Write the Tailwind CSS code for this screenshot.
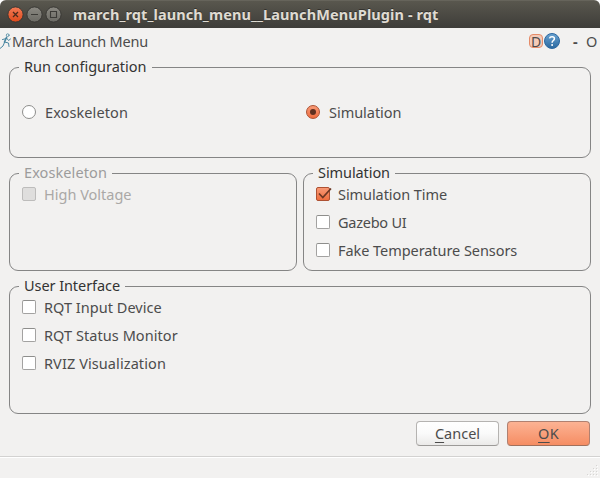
<!DOCTYPE html>
<html lang="en">
<head>
<meta charset="utf-8">
<title>march_rqt_launch_menu__LaunchMenuPlugin - rqt</title>
<script src="https://cdn.jsdelivr.net/npm/@tailwindcss/browser@4"></script>
</head>
<body class="bg-white">
<div class="flex h-[478px] w-[600px] flex-col overflow-hidden rounded-t-[6px] bg-[#f2f1f0] font-['Noto_Sans','Open_Sans',sans-serif] text-[14.5px] leading-5 text-[#4c4c4c] whitespace-nowrap">

  <header class="flex h-7 shrink-0 items-center border-t border-[#66645b] bg-linear-to-b from-[#59574e] to-[#3e3d39] pl-[7px]">
    <svg class="h-[17px] w-[56px] shrink-0" viewBox="0 0 56 17" fill="none">
      <defs>
        <linearGradient id="close" x1="0" y1="0" x2="0" y2="1"><stop stop-color="#f47b56"/><stop offset="1" stop-color="#df4a1b"/></linearGradient>
        <linearGradient id="grey" x1="0" y1="0" x2="0" y2="1"><stop stop-color="#8b8982"/><stop offset="1" stop-color="#6b6a64"/></linearGradient>
      </defs>
      <circle cx="8.5" cy="8.5" r="7.6" fill="url(#close)" stroke="#373632" stroke-width=".9"/>
      <circle cx="27.5" cy="8.5" r="7.6" fill="url(#grey)" stroke="#373632" stroke-width=".9"/>
      <circle cx="46.5" cy="8.5" r="7.6" fill="url(#grey)" stroke="#373632" stroke-width=".9"/>
      <path d="M6 6l5 5M11 6l-5 5" stroke="#4c2a1c" stroke-width="1.3"/>
      <path d="M24 8.5h7" stroke="#3c3b37" stroke-width="1.1"/>
      <path d="M43.5 5.5h6v6h-6z" stroke="#3c3b37" stroke-width="1.1"/>
    </svg>
    <h1 class="mb-[2px] ml-[10px] text-[14.5px] font-bold tracking-[0.1px] text-[#dfdbd2] [text-shadow:0_-1px_0_#33322e]">march_rqt_launch_menu__LaunchMenuPlugin - rqt</h1>
  </header>

  <div class="flex h-[29px] shrink-0 items-center pb-[3px]">
    <svg class="h-[18px] w-3 shrink-0" viewBox="0 0 12 18" fill="none" stroke="#4a86a0" stroke-linecap="round" stroke-linejoin="round">
      <circle cx="7.7" cy="3.2" r="1.4" stroke-width=".8"/>
      <path d="M6.5 5.5L4.5 10" stroke-width="1.7"/>
      <path d="M6.500 6.500L2.500 7.500M7 6.500l1.500 2L10.500 7M4.500 10l4 1 .5 3.500M4.500 10.500l-1.500 3.500-3 2.500" stroke-width="1"/>
    </svg>
    <span class="tracking-[-0.19px]">March Launch Menu</span>
    <div class="ml-auto flex items-center">
      <span class="flex h-[14px] w-[14px] items-center justify-center rounded-[4px] border border-[#e58b68] bg-[#f4cbb9] pt-[2px] text-[14px] leading-3">D</span>
      <svg class="ml-px h-4 w-4" viewBox="0 0 16 16">
        <defs><linearGradient id="help" x1="0" y1="0" x2="0" y2="1"><stop stop-color="#6aa3d2"/><stop offset="1" stop-color="#2a689f"/></linearGradient></defs>
        <circle cx="8" cy="8" r="7.500" fill="url(#help)" stroke="#2d68a0"/>
        <path d="M5.500 5.300C6 3.200 10.400 3.100 10.400 5.700c0 1.700-2.300 1.900-2.300 4" fill="none" stroke="#fff" stroke-width="1.500"/>
        <circle cx="8.100" cy="12" r="1" fill="#fff"/>
      </svg>
      <span class="ml-[13px] w-[13px] font-bold">-</span>
      <span class="w-[14px]">O</span>
    </div>
  </div>

  <main class="flex shrink-0 flex-col pr-[9px] pl-[9px]">
    <fieldset class="h-[101px] rounded-[9px] border border-[#858585] pl-[9px]">
      <legend class="h-[21px] px-[5px] leading-[19px] text-[#333]">Run configuration</legend>
      <div class="flex pt-6 pl-[3px]">
        <label class="flex w-[284px] items-center gap-[9px]">
          <i class="size-[14px] rounded-full border border-[#8e8e8c] bg-white"></i>
          <span class="tracking-[0.09px]">Exoskeleton</span>
        </label>
        <label class="flex items-center gap-[9px]">
          <i class="flex size-[14px] items-center justify-center rounded-full border border-[#ad5133] bg-linear-to-b from-[#f89a77] to-[#ee6c3d]"><b class="size-[6px] rounded-full bg-[#5f3020]"></b></i>
          <span class="tracking-[-0.03px]">Simulation</span>
        </label>
      </div>
    </fieldset>

    <div class="mt-[5px] flex gap-[6px]">
      <fieldset class="h-[108px] w-[288px] rounded-[9px] border border-[#858585] pl-[9px] text-[#aaa8a6]">
        <legend class="h-[21px] px-[5px] leading-[19px] tracking-[0.09px] text-[#9c9c9c]">Exoskeleton</legend>
        <label class="flex items-center gap-2 pl-[3px]">
          <i class="size-[14px] rounded-[2px] border border-[#bdbcbb] bg-[#dfdedd]"></i>
          <span>High Voltage</span>
        </label>
      </fieldset>
      <fieldset class="h-[108px] w-[288px] rounded-[9px] border border-[#858585] pl-[9px]">
        <legend class="h-[21px] px-[5px] leading-[19px] tracking-[-0.08px] text-[#333]">Simulation</legend>
        <div class="flex flex-col gap-2 pl-[3px]">
          <label class="flex items-center gap-2">
            <svg class="-mr-[2px] h-[14px] w-4" viewBox="0 0 16 14" fill="none">
              <defs><linearGradient id="check" x1="0" y1="0" x2="0" y2="1"><stop stop-color="#f89a77"/><stop offset="1" stop-color="#ee6c3d"/></linearGradient></defs>
              <rect x=".5" y=".5" width="13" height="13" rx="1.500" fill="url(#check)" stroke="#ad5133"/>
              <path d="M3 6.500l3.800 4L15 1.500" stroke="#6b3623" stroke-width="1.700"/>
            </svg>
            <span class="tracking-[-0.07px]">Simulation Time</span>
          </label>
          <label class="flex items-center gap-2">
            <i class="size-[14px] rounded-[2px] border border-[#a3a2a1] border-t-[#8e8e8c] bg-white"></i>
            <span class="tracking-[-0.25px]">Gazebo UI</span>
          </label>
          <label class="flex items-center gap-2">
            <i class="size-[14px] rounded-[2px] border border-[#a3a2a1] border-t-[#8e8e8c] bg-white"></i>
            <span class="tracking-[-0.06px]">Fake Temperature Sensors</span>
          </label>
        </div>
      </fieldset>
    </div>

    <fieldset class="mt-[5px] h-[138px] rounded-[9px] border border-[#858585] pl-[9px]">
      <legend class="h-[21px] px-[5px] leading-[19px] tracking-[-0.07px] text-[#333]">User Interface</legend>
      <div class="flex flex-col gap-2 pl-[3px]">
        <label class="flex items-center gap-2">
          <i class="size-[14px] rounded-[2px] border border-[#a3a2a1] border-t-[#8e8e8c] bg-white"></i>
          <span class="tracking-[0.03px]">RQT Input Device</span>
        </label>
        <label class="flex items-center gap-2">
          <i class="size-[14px] rounded-[2px] border border-[#a3a2a1] border-t-[#8e8e8c] bg-white"></i>
          <span class="tracking-[0.06px]">RQT Status Monitor</span>
        </label>
        <label class="flex items-center gap-2">
          <i class="size-[14px] rounded-[2px] border border-[#a3a2a1] border-t-[#8e8e8c] bg-white"></i>
          <span class="tracking-[0.09px]">RVIZ Visualization</span>
        </label>
      </div>
    </fieldset>
  </main>

  <div class="mt-[7px] flex shrink-0 justify-end gap-2 pr-[10px]">
    <button class="h-[25px] w-[83px] rounded-[4px] border border-[#b5b3b1] border-b-[#9c9a98] bg-linear-to-b from-white via-[#fafafa] to-[#ebeae9] leading-[23px]"><span class="underline decoration-1 underline-offset-[3px]">C</span>ancel</button>
    <button class="h-[25px] w-[83px] rounded-[4px] border border-[#b08070] border-b-[#a0705c] bg-linear-to-b from-[#fcb293] to-[#f58d63] leading-[23px] tracking-[0.3px]"><span class="underline decoration-1 underline-offset-[3px]">O</span>K</button>
  </div>

  <footer class="mt-[10px] flex grow items-end justify-end border-t border-[#d3d2d1] pr-[2px] pb-[2px] shadow-[inset_0_1px_0_#fff]">
    <svg class="size-[11px]" viewBox="0 0 11 11" fill="#d6d5d3">
      <path d="M9 0h1v1h-1zM9 3h1v1h-1zM6 3h1v1h-1zM9 6h1v1h-1zM6 6h1v1h-1zM3 6h1v1h-1zM9 9h1v1h-1zM6 9h1v1h-1zM3 9h1v1h-1zM0 9h1v1h-1z"/>
      <path fill="#fff" d="M10 1h1v1h-1zM10 4h1v1h-1zM7 4h1v1h-1zM10 7h1v1h-1zM7 7h1v1h-1zM4 7h1v1h-1zM10 10h1v1h-1zM7 10h1v1h-1zM4 10h1v1h-1zM1 10h1v1h-1z"/>
    </svg>
  </footer>
</div>
</body>
</html>
